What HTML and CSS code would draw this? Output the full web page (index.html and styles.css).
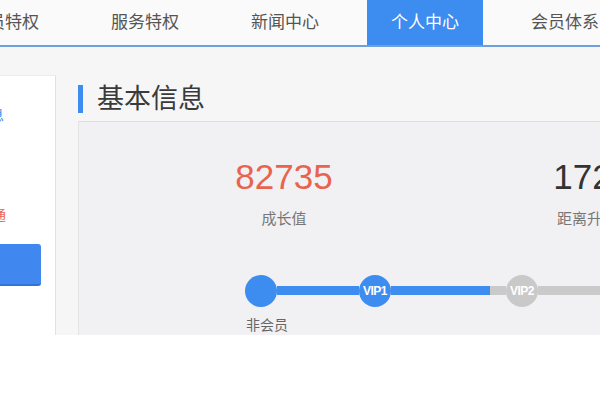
FILE: index.html
```html
<!DOCTYPE html>
<html lang="zh-CN">

<head>
    <meta charset="UTF-8">
    <title>个人中心</title>
    <link rel="stylesheet" href="styles.css">
</head>

<body>
    <div class="page">
        <div class="nav">
            <a class="tab">会员特权</a>
            <a class="tab">服务特权</a>
            <a class="tab">新闻中心</a>
            <a class="tab active">个人中心</a>
            <a class="tab">会员体系</a>
        </div>
        <div class="wrap">
            <div class="side">
                <div class="side-inner">
                    <p class="side-link">我的信息</p>
                    <p class="side-tip">立即开通</p>
                    <div class="side-btn"></div>
                    <p class="side-foot">更多 帮助</p>
                </div>
            </div>
            <div class="main">
                <h2 class="title">基本信息</h2>
                <div class="card">
                    <div class="stats">
                        <div class="stat">
                            <div class="num red">82735</div>
                            <div class="label">成长值</div>
                        </div>
                        <div class="stat">
                            <div class="num">17265</div>
                            <div class="label">距离升级还需</div>
                        </div>
                    </div>
                    <div class="track">
                        <div class="node first">
                            <span class="dot big"></span>
                            <span class="node-name">非会员</span>
                        </div>
                        <span class="bar on w1"></span>
                        <div class="node">
                            <span class="dot">VIP1</span>
                        </div>
                        <span class="bar on w2"></span>
                        <span class="bar off w3"></span>
                        <div class="node">
                            <span class="dot off">VIP2</span>
                        </div>
                        <span class="bar off w4"></span>
                    </div>
                </div>
            </div>
        </div>
    </div>
</body>

</html>
```

FILE: styles.css
```css
* {
    margin: 0;
    padding: 0;
}

body {
    background: #fff;
    font-family: "Liberation Sans", "Noto Sans CJK SC", sans-serif;
}

.page {
    width: 600px;
    height: 335px;
    overflow: hidden;
    background: #f6f6f7;
}

.nav {
    display: flex;
    gap: 24px;
    height: 45px;
    margin-left: -53px;
    background: #fafafa;
    border-bottom: 2px solid #6f9fdc;
}

.nav .tab {
    flex: none;
    width: 116px;
    line-height: 45px;
    text-align: center;
    font-size: 17px;
    color: #555;
}

.nav .tab.active {
    background: #3d8cf0;
    color: #fff;
}

.wrap {
    display: flex;
    padding-top: 28px;
}

.side {
    flex: none;
    width: 55px;
    height: 270px;
    overflow: hidden;
    background: #fff;
    border-right: 1px solid #e2e2e4;
    border-top: 1px solid #ececec;
}

.side-inner {
    width: 101px;
    margin-left: -60px;
}

.side-link {
    margin-top: 28px;
    text-align: right;
    font-size: 14px;
    color: #3d8cf0;
    margin-right: 37px;
}

.side-tip {
    margin-top: 80px;
    text-align: right;
    margin-right: 35px;
    font-size: 14px;
    color: #e8644f;
}

.side-btn {
    margin-top: 20px;
    height: 40px;
    background: #4088f0;
    border-bottom: 2px solid #2f74d8;
    border-radius: 3px;
}

.side-foot {
    margin-top: 48px;
    text-align: right;
    margin-right: 20px;
    font-size: 7px;
    color: #999;
}

.main {
    flex: none;
    width: 560px;
    padding-left: 22px;
}

.title {
    height: 28px;
    margin-top: 10px;
    padding-left: 14px;
    border-left: 5px solid #3d8cf0;
    font-size: 27px;
    font-weight: normal;
    line-height: 28px;
    color: #3a3a3a;
}

.card {
    margin-top: 8px;
    width: 620px;
    height: 220px;
    background: #f1f1f3;
    border-top: 1px solid #dcdcde;
    border-left: 1px solid #e4e4e6;
}

.stats {
    display: flex;
    gap: 158px;
    padding-top: 35px;
    padding-left: 125px;
}

.stat {
    width: 160px;
    text-align: center;
}

.num {
    font-size: 35px;
    line-height: 40px;
    color: #333;
}

.num.red {
    color: #e8644f;
}

.label {
    margin-top: 10px;
    font-size: 15px;
    color: #777;
}

.track {
    display: flex;
    align-items: flex-start;
    margin-top: 47px;
    padding-left: 166px;
}

.node {
    display: flex;
    flex-direction: column;
    align-items: center;
    width: 32px;
}

.node-name {
    margin-top: 7px;
    width: 60px;
    text-align: center;
    font-size: 14px;
    color: #666;
    margin-left: 12px;
}

.dot {
    width: 32px;
    height: 32px;
    border-radius: 50%;
    background: #3d8cf0;
    color: #fff;
    font-size: 12px;
    font-weight: bold;
    line-height: 32px;
    letter-spacing: -0.5px;
    text-align: center;
}

.dot.off {
    background: #c9c9c9;
}

.bar {
    flex: none;
    height: 9px;
    margin-top: 11px;
}

.bar.on {
    background: #3d8cf0;
}

.bar.off {
    background: #cacaca;
}

.w1 {
    width: 82px;
}

.w2 {
    width: 99px;
}

.w3 {
    width: 16px;
}

.w4 {
    width: 120px;
}
```
